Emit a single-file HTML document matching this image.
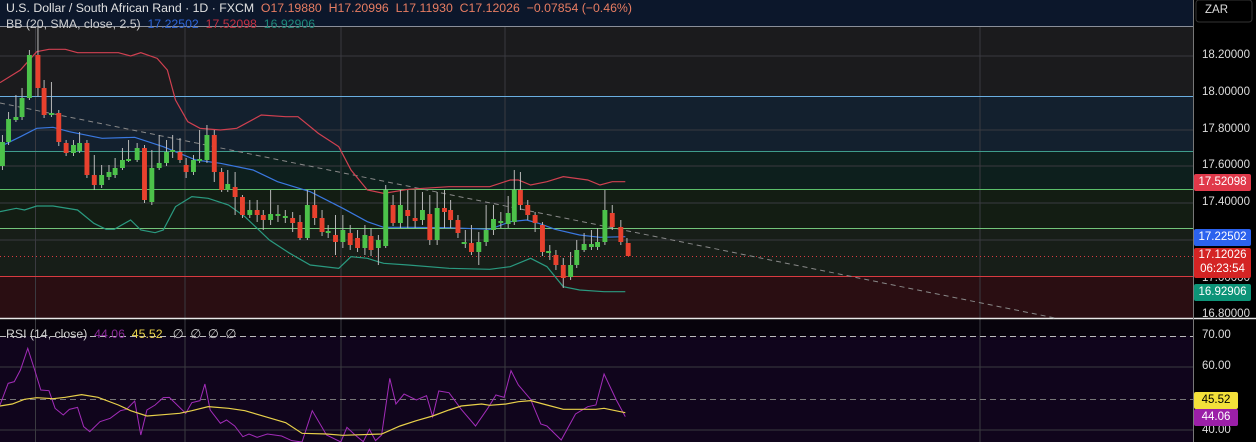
<!DOCTYPE html>
<html><head><meta charset="utf-8"><style>
body{margin:0;width:1256px;height:442px;overflow:hidden;background:#000;font-family:"Liberation Sans",sans-serif;}
.t{position:absolute;font-size:12px;white-space:nowrap;}
.lab{position:absolute;left:1194px;width:57px;height:17px;border-radius:2px;color:#fff;font-size:11.5px;text-align:center;line-height:17px;}
.ax{position:absolute;left:1202px;color:#ddd;font-size:11.5px;}
</style></head><body>
<svg width="1256" height="442" style="position:absolute;left:0;top:0">
<rect x="0" y="0" width="1193" height="26" fill="#0c172b"/>
<rect x="0" y="26" width="1193" height="70" fill="#1b1b1d"/>
<rect x="0" y="96" width="1193" height="55" fill="#13202e"/>
<rect x="0" y="151" width="1193" height="38" fill="#0d1f1d"/>
<rect x="0" y="189" width="1193" height="39" fill="#131d13"/>
<rect x="0" y="228" width="1193" height="48" fill="#171e18"/>
<rect x="0" y="276" width="1193" height="42" fill="#2a0e12"/>
<rect x="0" y="320" width="1193" height="122" fill="#10051c"/>
<rect x="0" y="320" width="1193" height="16" fill="#07030c"/>
<g stroke="#3a3a40" stroke-width="1">
<line x1="35.5" y1="26" x2="35.5" y2="442"/><line x1="185" y1="26" x2="185" y2="442"/><line x1="341" y1="26" x2="341" y2="442"/><line x1="505" y1="26" x2="505" y2="442"/><line x1="980" y1="26" x2="980" y2="442"/>
<line x1="0" y1="56" x2="1193" y2="56"/><line x1="0" y1="130" x2="1193" y2="130"/><line x1="0" y1="166" x2="1193" y2="166"/><line x1="0" y1="203" x2="1193" y2="203"/><line x1="0" y1="240" x2="1193" y2="240"/><line x1="0" y1="367" x2="1193" y2="367"/><line x1="0" y1="430" x2="1193" y2="430"/>
</g>
<line x1="0" y1="26.5" x2="1193" y2="26.5" stroke="#8a8f99"/>
<line x1="0" y1="96.5" x2="1193" y2="96.5" stroke="#6aaee0"/>
<line x1="0" y1="151.5" x2="1193" y2="151.5" stroke="#3f9c8c"/>
<line x1="0" y1="189.5" x2="1193" y2="189.5" stroke="#5cbf6a"/>
<line x1="0" y1="228.5" x2="1193" y2="228.5" stroke="#72c47a"/>
<line x1="0" y1="276.5" x2="1193" y2="276.5" stroke="#d83a40"/>
<line x1="0" y1="256.5" x2="1193" y2="256.5" stroke="#d83a40" stroke-dasharray="1 3"/>
<line x1="0" y1="318.5" x2="1256" y2="318.5" stroke="#e8e8e8" stroke-width="1.5"/>
<line x1="1193.5" y1="0" x2="1193.5" y2="442" stroke="#777"/>
<line x1="0" y1="336.5" x2="1193" y2="336.5" stroke="#bbb" stroke-dasharray="6 4"/>
<line x1="0" y1="399.5" x2="1193" y2="399.5" stroke="#777" stroke-dasharray="6 4"/>
<line x1="0" y1="103" x2="1055" y2="318" stroke="#888" stroke-dasharray="5 4"/>
<g transform="scale(0.40816,0.33333)" fill="none" stroke-width="1.2" vector-effect="non-scaling-stroke">
<polyline vector-effect="non-scaling-stroke" stroke="#d04050" points="0,248 50,210 90,155 120,148 160,148 190,158 290,158 320,168 345,158 385,175 410,210 430,300 460,365 490,385 540,390 580,385 640,345 700,350 730,350 780,400 830,440 860,510 900,570 940,580 1000,568 1100,560 1200,560 1250,540 1270,540 1300,555 1340,545 1380,530 1440,540 1470,555 1500,545 1532,545"/>
<polyline vector-effect="non-scaling-stroke" stroke="#3a78e0" points="0,440 50,410 90,385 130,382 170,395 250,415 330,412 400,440 480,480 540,490 620,510 680,545 760,575 840,625 900,665 940,682 1000,682 1100,683 1200,688 1250,665 1290,660 1320,670 1360,688 1420,705 1470,712 1532,710"/>
<polyline vector-effect="non-scaling-stroke" stroke="#2a9a80" points="0,635 40,625 60,630 90,618 130,618 190,630 230,670 260,688 280,688 320,660 345,690 380,698 400,690 430,620 470,590 510,595 560,615 600,650 660,720 710,760 760,795 830,805 860,770 900,775 940,790 1000,795 1100,805 1200,808 1250,800 1300,775 1340,800 1380,860 1420,870 1480,875 1532,875"/>
</g>
<g transform="scale(1.2245,1)" stroke-width="0.8">
<g fill="#4cc24a" stroke="#bbb">
<line x1="2" y1="135" x2="2" y2="170"/><line x1="7" y1="112" x2="7" y2="145"/><line x1="13" y1="95" x2="13" y2="122"/><line x1="18" y1="88" x2="18" y2="120"/><line x1="24" y1="50" x2="24" y2="100"/><line x1="31" y1="25" x2="31" y2="97"/><line x1="36" y1="80" x2="36" y2="118"/><line x1="42" y1="82" x2="42" y2="117"/><line x1="48" y1="110" x2="48" y2="146"/><line x1="54" y1="140" x2="54" y2="156"/><line x1="60" y1="140" x2="60" y2="156"/><line x1="65" y1="132" x2="65" y2="153"/><line x1="71" y1="140" x2="71" y2="178"/><line x1="77" y1="155" x2="77" y2="190"/><line x1="83" y1="165" x2="83" y2="188"/><line x1="89" y1="165" x2="89" y2="180"/><line x1="94" y1="158" x2="94" y2="178"/><line x1="100" y1="148" x2="100" y2="170"/><line x1="105" y1="140" x2="105" y2="162"/><line x1="112" y1="143" x2="112" y2="162"/><line x1="118" y1="145" x2="118" y2="203"/><line x1="124" y1="150" x2="124" y2="205"/><line x1="130" y1="135" x2="130" y2="170"/><line x1="136" y1="140" x2="136" y2="166"/><line x1="141" y1="135" x2="141" y2="158"/><line x1="147" y1="138" x2="147" y2="163"/><line x1="152" y1="158" x2="152" y2="178"/><line x1="158" y1="155" x2="158" y2="175"/><line x1="163" y1="130" x2="163" y2="163"/><line x1="169" y1="125" x2="169" y2="163"/><line x1="175" y1="130" x2="175" y2="182"/><line x1="181" y1="168" x2="181" y2="192"/><line x1="186" y1="170" x2="186" y2="192"/><line x1="192" y1="172" x2="192" y2="215"/><line x1="198" y1="195" x2="198" y2="218"/><line x1="204" y1="200" x2="204" y2="218"/><line x1="210" y1="200" x2="210" y2="222"/><line x1="215" y1="210" x2="215" y2="230"/><line x1="221" y1="190" x2="221" y2="225"/><line x1="227" y1="205" x2="227" y2="222"/><line x1="233" y1="210" x2="233" y2="223"/><line x1="239" y1="212" x2="239" y2="232"/><line x1="245" y1="215" x2="245" y2="240"/><line x1="251" y1="190" x2="251" y2="240"/><line x1="257" y1="190" x2="257" y2="225"/><line x1="263" y1="210" x2="263" y2="236"/><line x1="268" y1="225" x2="268" y2="238"/><line x1="274" y1="215" x2="274" y2="255"/><line x1="280" y1="215" x2="280" y2="248"/><line x1="286" y1="225" x2="286" y2="250"/><line x1="292" y1="230" x2="292" y2="252"/><line x1="298" y1="225" x2="298" y2="255"/><line x1="303" y1="228" x2="303" y2="256"/><line x1="309" y1="235" x2="309" y2="265"/><line x1="315" y1="185" x2="315" y2="248"/><line x1="321" y1="195" x2="321" y2="226"/><line x1="327" y1="190" x2="327" y2="228"/><line x1="333" y1="190" x2="333" y2="228"/><line x1="339" y1="190" x2="339" y2="228"/><line x1="345" y1="192" x2="345" y2="225"/><line x1="351" y1="195" x2="351" y2="245"/><line x1="357" y1="192" x2="357" y2="245"/><line x1="363" y1="190" x2="363" y2="228"/><line x1="368" y1="200" x2="368" y2="228"/><line x1="374" y1="215" x2="374" y2="238"/><line x1="380" y1="230" x2="380" y2="248"/><line x1="385" y1="225" x2="385" y2="255"/><line x1="391" y1="232" x2="391" y2="265"/><line x1="397" y1="205" x2="397" y2="246"/><line x1="403" y1="205" x2="403" y2="235"/><line x1="409" y1="212" x2="409" y2="228"/><line x1="415" y1="196" x2="415" y2="228"/><line x1="420" y1="170" x2="420" y2="225"/><line x1="425" y1="172" x2="425" y2="210"/><line x1="431" y1="200" x2="431" y2="220"/><line x1="437" y1="212" x2="437" y2="232"/><line x1="443" y1="222" x2="443" y2="256"/><line x1="449" y1="245" x2="449" y2="260"/><line x1="454" y1="250" x2="454" y2="270"/><line x1="460" y1="258" x2="460" y2="288"/><line x1="466" y1="252" x2="466" y2="280"/><line x1="471" y1="240" x2="471" y2="268"/><line x1="477" y1="233" x2="477" y2="252"/><line x1="483" y1="230" x2="483" y2="250"/><line x1="488" y1="228" x2="488" y2="250"/><line x1="494" y1="190" x2="494" y2="245"/><line x1="500" y1="205" x2="500" y2="230"/><line x1="507" y1="220" x2="507" y2="245"/><line x1="512" y1="238" x2="512" y2="256"/>
</g>
<g fill="#4cc24a"><rect x="0" y="142" width="4" height="24"/><rect x="5" y="119" width="4" height="23"/><rect x="11" y="117" width="4" height="3"/><rect x="16" y="98" width="4" height="19"/><rect x="22" y="55" width="4" height="43"/><rect x="40" y="113" width="4" height="2"/><rect x="58" y="145" width="4" height="8"/><rect x="63" y="143" width="4" height="8"/><rect x="81" y="175" width="4" height="10"/><rect x="87" y="172" width="4" height="5"/><rect x="92" y="168" width="4" height="7"/><rect x="98" y="160" width="4" height="8"/><rect x="103" y="159" width="4" height="2"/><rect x="110" y="148" width="4" height="12"/><rect x="122" y="168" width="4" height="34"/><rect x="128" y="163" width="4" height="5"/><rect x="134" y="152" width="4" height="11"/><rect x="139" y="150" width="4" height="2"/><rect x="156" y="160" width="4" height="12"/><rect x="161" y="159" width="4" height="2"/><rect x="167" y="135" width="4" height="25"/><rect x="184" y="184" width="4" height="6"/><rect x="202" y="210" width="4" height="5"/><rect x="219" y="214" width="4" height="6"/><rect x="225" y="214" width="4" height="2"/><rect x="231" y="216" width="4" height="2"/><rect x="249" y="205" width="4" height="33"/><rect x="266" y="231" width="4" height="2"/><rect x="278" y="230" width="4" height="12"/><rect x="296" y="235" width="4" height="13"/><rect x="307" y="240" width="4" height="8"/><rect x="313" y="190" width="4" height="56"/><rect x="325" y="205" width="4" height="18"/><rect x="343" y="210" width="4" height="10"/><rect x="355" y="208" width="4" height="32"/><rect x="377" y="242" width="4" height="2"/><rect x="389" y="242" width="4" height="10"/><rect x="395" y="230" width="4" height="12"/><rect x="401" y="219" width="4" height="11"/><rect x="407" y="221" width="4" height="2"/><rect x="413" y="213" width="4" height="11"/><rect x="418" y="190" width="4" height="32"/><rect x="446" y="251" width="4" height="2"/><rect x="464" y="265" width="4" height="12"/><rect x="469" y="250" width="4" height="15"/><rect x="475" y="244" width="4" height="6"/><rect x="481" y="244" width="4" height="3"/><rect x="486" y="242" width="4" height="5"/><rect x="492" y="210" width="4" height="32"/></g>
<g fill="#e8412e"><rect x="29" y="55" width="4" height="33"/><rect x="34" y="88" width="4" height="27"/><rect x="46" y="113" width="4" height="29"/><rect x="52" y="143" width="4" height="10"/><rect x="69" y="143" width="4" height="32"/><rect x="75" y="175" width="4" height="10"/><rect x="116" y="148" width="4" height="52"/><rect x="145" y="152" width="4" height="8"/><rect x="150" y="165" width="4" height="7"/><rect x="173" y="135" width="4" height="37"/><rect x="179" y="172" width="4" height="18"/><rect x="190" y="187" width="4" height="10"/><rect x="196" y="197" width="4" height="18"/><rect x="208" y="210" width="4" height="5"/><rect x="213" y="215" width="4" height="5"/><rect x="237" y="218" width="4" height="5"/><rect x="243" y="222" width="4" height="16"/><rect x="255" y="205" width="4" height="13"/><rect x="261" y="218" width="4" height="14"/><rect x="272" y="235" width="4" height="7"/><rect x="284" y="233" width="4" height="12"/><rect x="290" y="238" width="4" height="10"/><rect x="301" y="236" width="4" height="14"/><rect x="319" y="205" width="4" height="18"/><rect x="331" y="210" width="4" height="6"/><rect x="337" y="218" width="4" height="3"/><rect x="349" y="214" width="4" height="26"/><rect x="361" y="208" width="4" height="4"/><rect x="366" y="210" width="4" height="10"/><rect x="372" y="220" width="4" height="13"/><rect x="383" y="243" width="4" height="9"/><rect x="423" y="190" width="4" height="15"/><rect x="429" y="205" width="4" height="10"/><rect x="435" y="215" width="4" height="8"/><rect x="441" y="225" width="4" height="27"/><rect x="452" y="255" width="4" height="10"/><rect x="458" y="265" width="4" height="13"/><rect x="498" y="213" width="4" height="14"/><rect x="505" y="227" width="4" height="15"/><rect x="511" y="243" width="4" height="13"/></g>
</g>
<g transform="translate(0,320) scale(0.40816,0.33333)" fill="none">
<polyline vector-effect="non-scaling-stroke" stroke="#a22cb8" stroke-width="1" points="0,255 20,190 35,185 50,150 68,85 85,150 100,210 120,212 135,265 155,285 170,268 190,262 205,320 220,335 245,305 270,295 295,272 310,268 330,243 345,345 360,270 380,255 400,233 415,232 430,250 455,280 470,248 490,242 502,192 515,270 540,310 555,300 575,318 595,350 610,342 630,352 655,342 690,348 715,362 740,366 765,272 800,345 835,366 850,322 870,345 890,365 905,328 920,362 935,345 955,175 970,252 990,222 1020,240 1045,227 1060,290 1075,213 1100,218 1130,268 1165,318 1195,265 1215,225 1235,232 1252,152 1270,195 1300,238 1325,312 1340,318 1375,360 1410,282 1440,260 1460,255 1480,162 1510,240 1532,290"/>
<polyline vector-effect="non-scaling-stroke" stroke="#e8d04a" stroke-width="1.2" points="0,258 30,252 60,238 90,233 130,236 160,232 200,224 240,232 290,255 320,272 360,288 400,284 440,280 470,272 510,260 560,265 600,272 650,290 700,308 740,340 800,342 840,346 935,342 980,318 1020,302 1060,288 1100,270 1130,258 1180,252 1200,256 1240,252 1270,245 1300,242 1340,255 1380,268 1420,268 1460,268 1480,265 1532,278"/>
</g>
<rect x="1196" y="0" width="56" height="22" rx="3" fill="#000" stroke="#333"/>
</svg>
<div class="t" style="left:6px;top:1px;color:#e0e0e0;font-size:12.3px">U.S. Dollar / South African Rand · 1D · FXCM &nbsp;<span style="color:#e87d62">O17.19880 &nbsp;H17.20996 &nbsp;L17.11930 &nbsp;C17.12026 &nbsp;−0.07854 (−0.46%)</span></div>
<div class="t" style="left:6px;top:17px;color:#d0d0d0;font-size:12.3px">BB (20, SMA, close, 2.5) &nbsp;<span style="color:#2f66d8">17.22502</span> &nbsp;<span style="color:#c43040">17.52098</span> &nbsp;<span style="color:#1f8a7a">16.92906</span></div>
<div class="t" style="left:6px;top:327px;color:#d0d0d0;font-size:12.3px">RSI (14, close) &nbsp;<span style="color:#8a2a9a">44.06</span> &nbsp;<span style="color:#e8d04a">45.52</span> &nbsp;&nbsp;∅ &nbsp;∅ &nbsp;∅ &nbsp;∅</div>
<div class="ax" style="left:1205px;top:4px;color:#ddd">ZAR</div>
<div class="ax" style="top:49px">18.20000</div>
<div class="ax" style="top:86px">18.00000</div>
<div class="ax" style="top:123px">17.80000</div>
<div class="ax" style="top:159px">17.60000</div>
<div class="ax" style="top:196px">17.40000</div>
<div class="ax" style="top:272px">17.00000</div>
<div class="ax" style="top:308px">16.80000</div>
<div class="ax" style="top:329px">70.00</div>
<div class="ax" style="top:360px">60.00</div>
<div class="ax" style="top:424px">40.00</div>
<div class="lab" style="top:174px;background:#e0394a">17.52098</div>
<div class="lab" style="top:229px;background:#2b62ee">17.22502</div>
<div class="lab" style="top:248px;height:30px;line-height:14px;background:#d42424">17.12026<br>06:23:54</div>
<div class="lab" style="top:284px;background:#0d9478">16.92906</div>
<div class="lab" style="top:392px;width:44px;background:#f3e03a;color:#000">45.52</div>
<div class="lab" style="top:409px;width:44px;background:#9b1fa8">44.06</div>
</body></html>
